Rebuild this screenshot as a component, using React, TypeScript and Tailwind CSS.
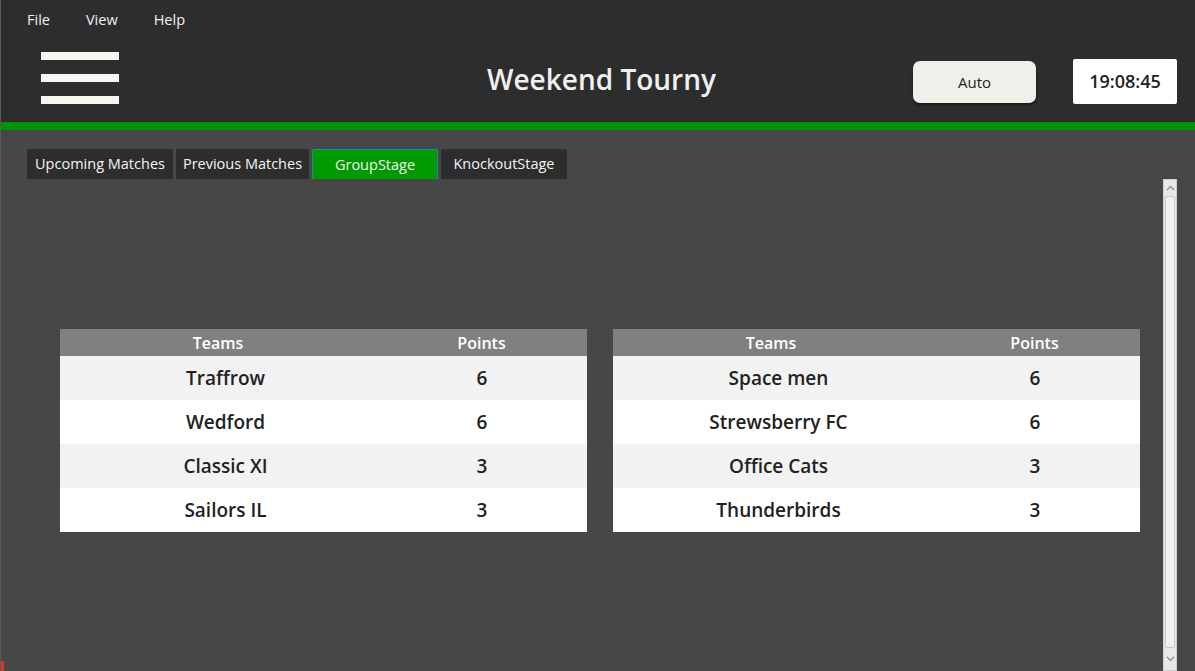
import React from "react";

const left = [
  ["Traffrow", "6"],
  ["Wedford", "6"],
  ["Classic XI", "3"],
  ["Sailors IL", "3"],
];
const right = [
  ["Space men", "6"],
  ["Strewsberry FC", "6"],
  ["Office Cats", "3"],
  ["Thunderbirds", "3"],
];

function Table({ rows }: { rows: string[][] }) {
  return (
    <div className="w-[527px] flex flex-col">
      <div className="flex h-[27px] bg-[#808080] text-white text-[16px] font-semibold items-center">
        <div className="w-[316px] text-center">Teams</div>
        <div className="flex-1 text-center">Points</div>
      </div>
      {rows.map((r, i) => (
        <div
          key={i}
          className={`flex h-[44px] items-center text-[19px] font-semibold text-[#222] ${
            i % 2 === 0 ? "bg-[#f2f2f2]" : "bg-white"
          }`}
        >
          <div className="w-[331px] text-center">{r[0]}</div>
          <div className="flex-1 text-center pr-[14px]">{r[1]}</div>
        </div>
      ))}
    </div>
  );
}

export default function App() {
  return (
    <div
      className="w-[1195px] h-[671px] flex flex-col bg-[#474747] overflow-hidden relative border-l border-[#5a5a5a]"
      style={{ fontFamily: '"Open Sans", "Noto Sans", sans-serif' }}
    >
      <div className="h-[122px] bg-[#2d2d2d] flex flex-col">
        <div className="h-[40px] flex items-center text-[14.5px] font-medium text-[#f0f0f0]">
          <span className="ml-[26px]">File</span>
          <span className="ml-[36px]">View</span>
          <span className="ml-[36px]">Help</span>
        </div>
        <div className="flex-1 flex items-start relative">
          <div className="ml-[40px] mt-[12px] flex flex-col gap-[14px] w-[78px]">
            <div className="h-[8px] bg-[#f7f7f2]" />
            <div className="h-[8px] bg-[#f7f7f2]" />
            <div className="h-[8px] bg-[#f7f7f2]" />
          </div>
          <div className="absolute left-[486px] top-[19px] text-[28px] font-semibold text-[#f0f0f0] leading-[40px]">
            Weekend Tourny
          </div>
          <div className="ml-auto mt-[21px] w-[123px] h-[42px] rounded-[7px] bg-[#f0f0eb] shadow-[0_2px_3px_rgba(0,0,0,0.5)] flex items-center justify-center text-[15px] font-medium text-[#222]">
            Auto
          </div>
          <div className="ml-[37px] mr-[18px] mt-[19px] w-[104px] h-[45px] rounded-[2px] bg-white flex items-center justify-center text-[18px] font-semibold text-[#222]">
            19:08:45
          </div>
        </div>
      </div>
      <div className="h-[8px] bg-[#009400]" />
      <div className="flex-1 flex">
        <div className="flex-1 flex flex-col">
          <div className="flex mt-[19px] ml-[26px] gap-[3px] h-[30px] text-[14.5px] font-medium text-[#f4f4f4]">
            <div className="w-[146px] bg-[#2d2d2d] rounded-t-[2px] flex items-center justify-center">Upcoming Matches</div>
            <div className="w-[133px] bg-[#2d2d2d] rounded-t-[2px] flex items-center justify-center">Previous Matches</div>
            <div className="w-[126px] bg-[#009900] border border-b-0 border-[#1a8fa0] rounded-t-[2px] flex items-center justify-center">GroupStage</div>
            <div className="w-[126px] bg-[#2d2d2d] rounded-t-[2px] flex items-center justify-center">KnockoutStage</div>
          </div>
          <div className="flex gap-[26px] ml-[59px] mt-[150px]">
            <Table rows={left} />
            <Table rows={right} />
          </div>
        </div>
        <div className="w-[14px] mr-[18px] mt-[49px] bg-[#e8e8e8] border border-[#d0d0d0] flex flex-col items-center">
          <div className="h-[16px] flex items-center justify-center">
            <svg width="9" height="6" viewBox="0 0 9 6"><path d="M1 5 L4.5 1.5 L8 5" stroke="#8a8a8a" strokeWidth="1.2" fill="none" /></svg>
          </div>
          <div className="w-[10px] flex-1 bg-[#f0f0f0] border border-[#c8c8c8] rounded-[2px]" />
          <div className="h-[22px] flex items-center justify-center">
            <svg width="9" height="6" viewBox="0 0 9 6"><path d="M1 1 L4.5 4.5 L8 1" stroke="#8a8a8a" strokeWidth="1.2" fill="none" /></svg>
          </div>
        </div>
      </div>
      <div className="absolute left-0 bottom-0 w-[3px] h-[10px] bg-[#d33]" />
    </div>
  );
}
